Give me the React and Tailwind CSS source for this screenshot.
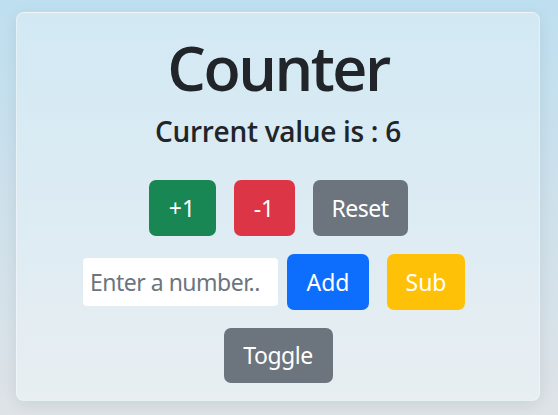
import React from "react";

export default function App() {
  return (
    <div
      className="w-full h-[415px] overflow-hidden bg-gradient-to-b from-[#bedff0] to-[#dee3e7] pt-[12px] pl-[16px]"
      style={{ fontFamily: '"Noto Sans", "Open Sans", sans-serif' }}
    >
      <div className="w-[524px] h-[389px] rounded-[8px] border border-white/40 bg-gradient-to-b from-[#d2e9f4] to-[#e8eef2] shadow-[0_4px_16px_rgba(0,0,0,0.08)] flex flex-col items-center">
        <h1
          className="mt-[16px] text-[61px] leading-[77px] font-semibold tracking-[-2.5px] text-[#212529]"
          style={{ fontFamily: '"Open Sans", "Noto Sans", sans-serif' }}
        >
          Counter
        </h1>
        <h3
          className="mt-[7px] text-[28px] leading-[36px] font-semibold tracking-[-0.3px] text-[#212529]"
          style={{ fontFamily: '"Open Sans", "Noto Sans", sans-serif' }}
        >
          Current value is : 6
        </h3>
        <div className="mt-[31px] flex gap-[18px]">
          <button className="w-[67px] h-[56px] rounded-[7px] bg-[#198754] text-white text-[23px]">+1</button>
          <button className="w-[61px] h-[56px] rounded-[7px] bg-[#dc3545] text-white text-[23px]">-1</button>
          <button className="w-[95px] h-[56px] rounded-[7px] bg-[#6c757d] text-white text-[23px] tracking-[-0.5px]">Reset</button>
        </div>
        <div className="mt-[18px] flex items-center pr-[8px]">
          <input
            placeholder="Enter a number.."
            className="w-[195px] h-[48px] rounded-[4px] bg-white pl-[7px] text-[23px] tracking-[-0.5px] text-[#212529] placeholder:text-[#6c757d] outline-none"
          />
          <button className="ml-[9px] w-[82px] h-[56px] rounded-[7px] bg-[#0d6efd] text-white text-[23px]">Add</button>
          <button className="ml-[18px] w-[78px] h-[56px] rounded-[7px] bg-[#ffc107] text-white text-[23px]">Sub</button>
        </div>
        <div className="mt-[18px] flex">
          <button className="w-[109px] h-[55px] rounded-[7px] bg-[#6c757d] text-white text-[23px] tracking-[-0.5px]">Toggle</button>
        </div>
      </div>
    </div>
  );
}
